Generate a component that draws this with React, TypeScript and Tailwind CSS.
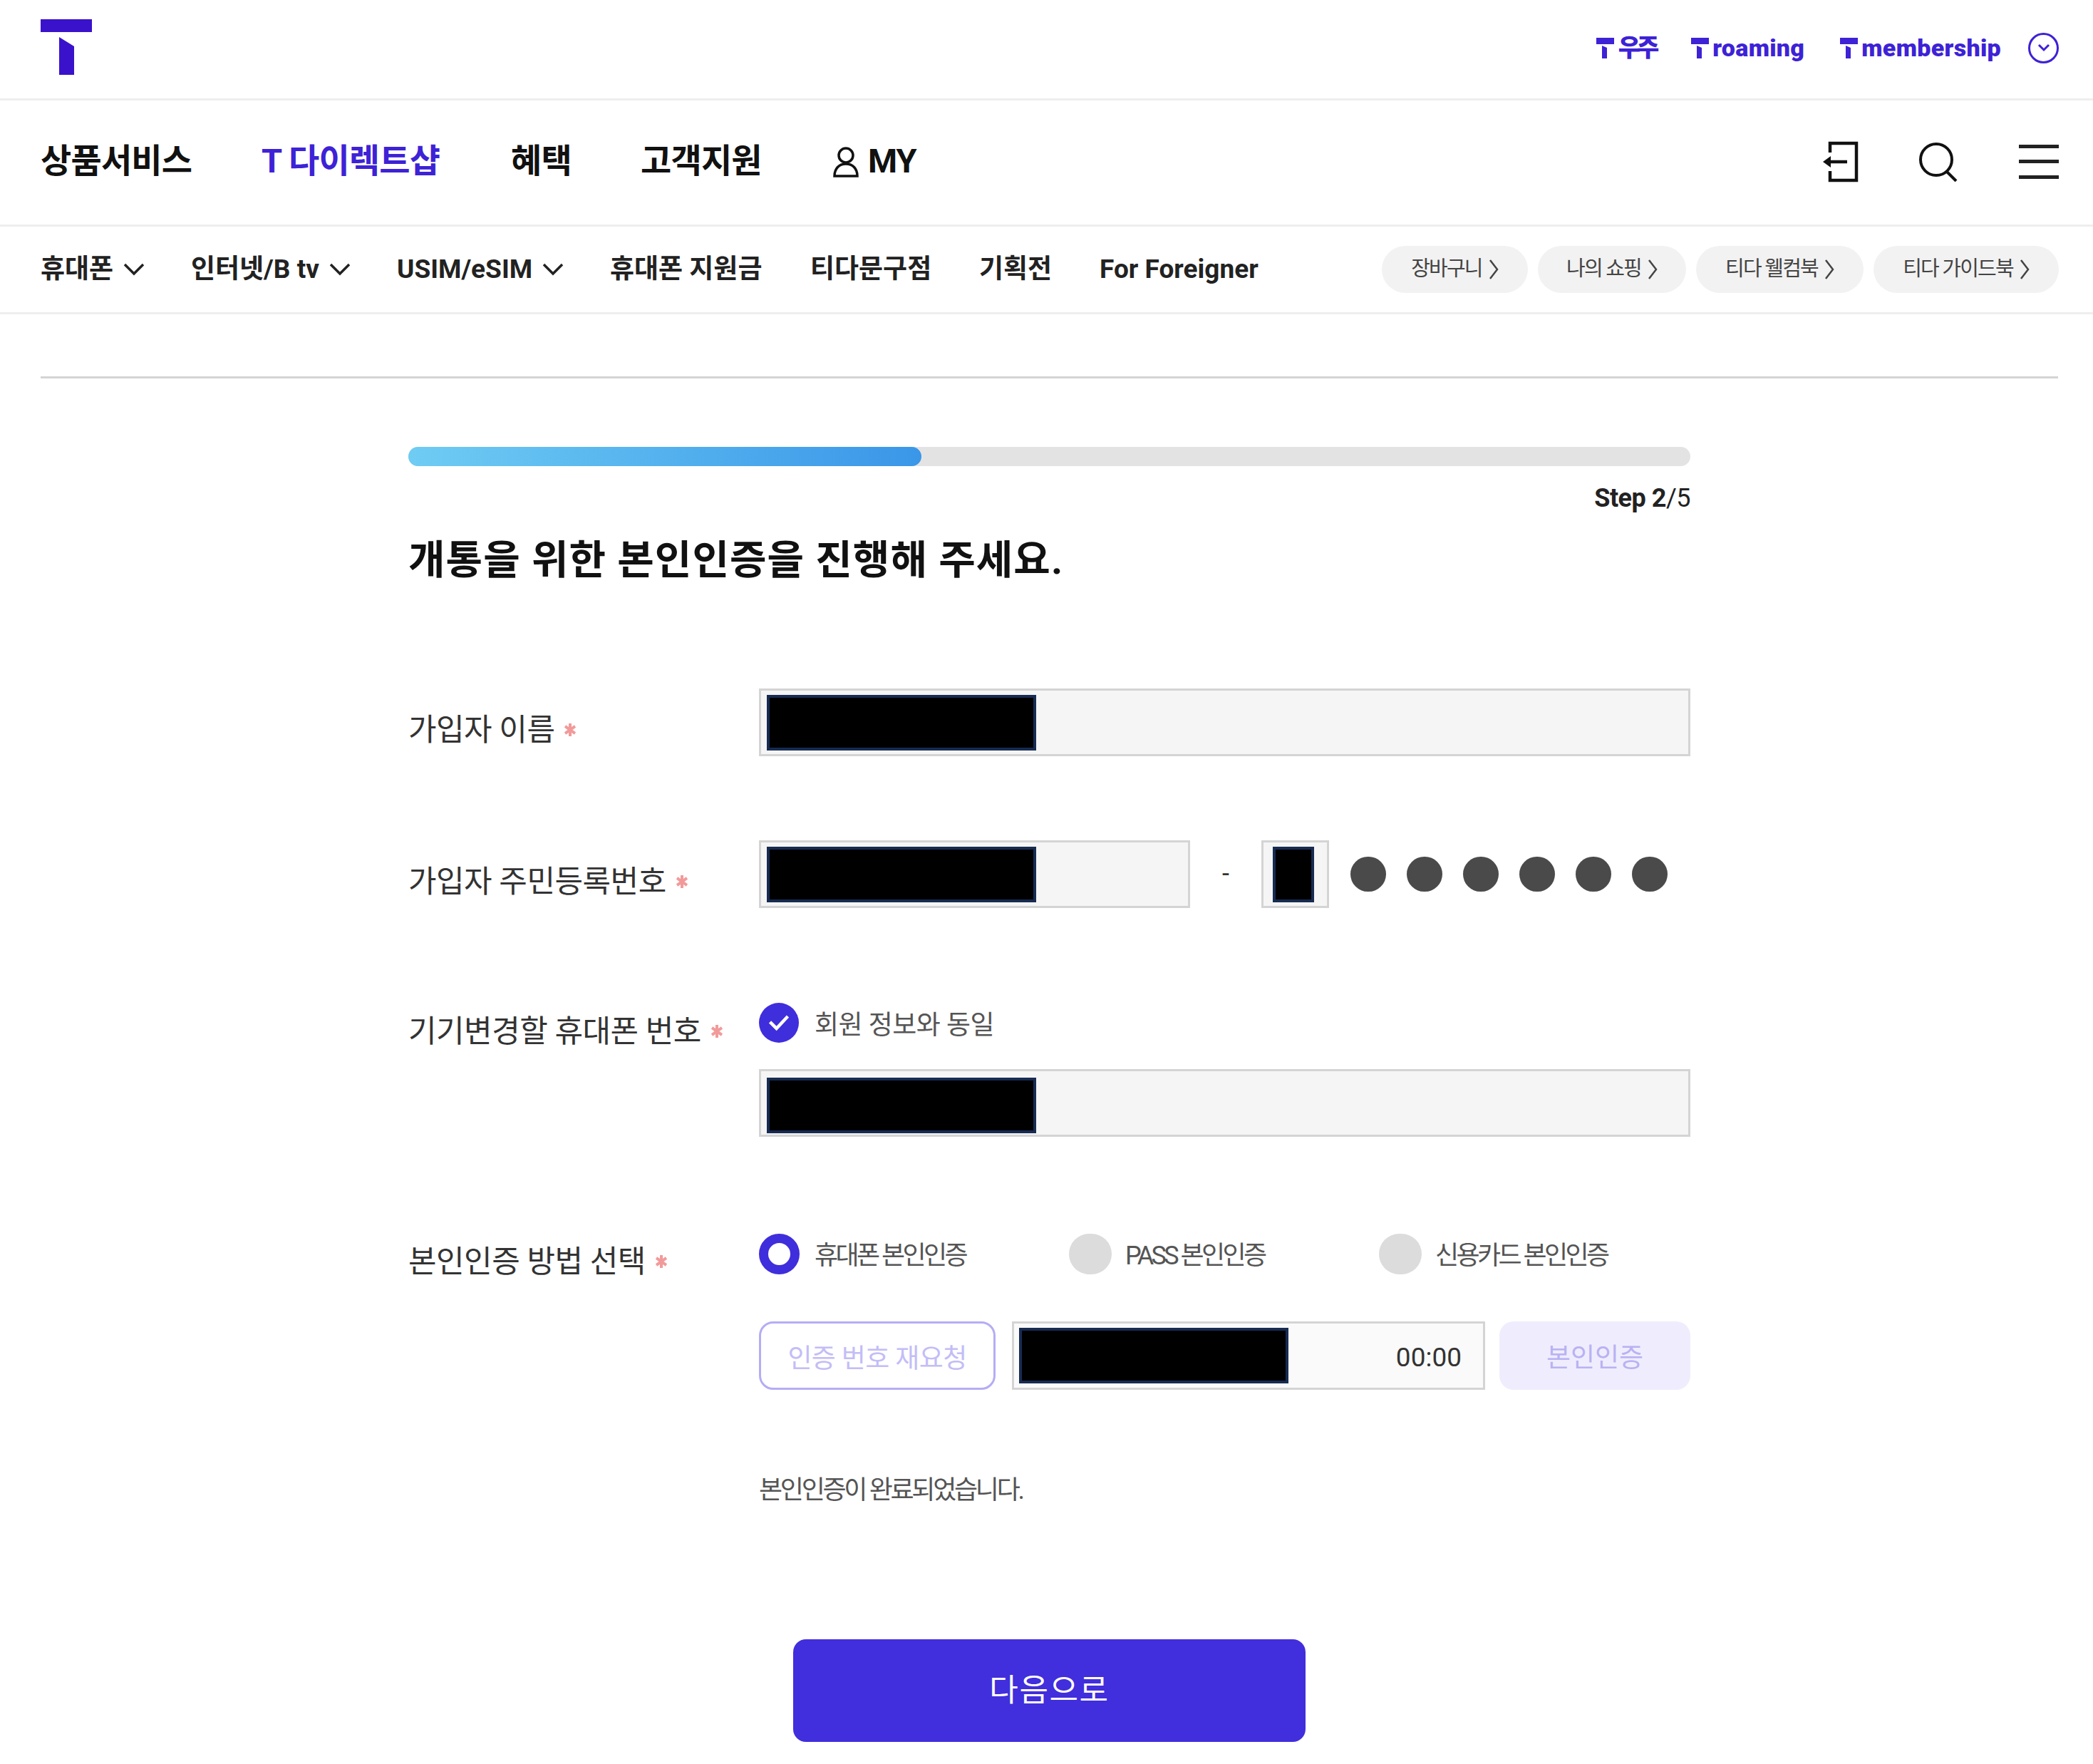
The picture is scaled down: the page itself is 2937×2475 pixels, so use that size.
const FONT = "font-['Roboto','Noto_Sans_CJK_KR',sans-serif]"

const MAIN_NAV = [
  { label: '상품서비스', active: false },
  { label: 'T 다이렉트샵', active: true },
  { label: '혜택', active: false },
  { label: '고객지원', active: false },
]

const SUB_NAV = [
  { label: '휴대폰', w: 'w-[211px]', caret: true },
  { label: '인터넷/B tv', w: 'w-[289px]', caret: true },
  { label: 'USIM/eSIM', w: 'w-[299px]', caret: true },
  { label: '휴대폰 지원금', w: 'w-[281px]', caret: false },
  { label: '티다문구점', w: 'w-[237px]', caret: false },
  { label: '기획전', w: 'w-[169px]', caret: false },
  { label: 'For Foreigner', w: 'w-auto', caret: false },
]

const PILLS = [
  { label: '장바구니', w: 'w-[205px]' },
  { label: '나의 쇼핑', w: 'w-[208px]' },
  { label: '티다 웰컴북', w: 'w-[235px]' },
  { label: '티다 가이드북', w: 'w-[260px]' },
]

function SmallT() {
  return (
    <svg width="25" height="30" viewBox="0 0 25 30" className="shrink-0">
      <rect x="0" y="1" width="25" height="9" fill="#3d22d6" />
      <path d="M8 12l7 3v15H8z" fill="#3d22d6" />
    </svg>
  )
}

function Caret() {
  return (
    <svg width="30" height="18" viewBox="0 0 30 18" fill="none" stroke="#222" strokeWidth="3.5" className="shrink-0">
      <path d="M2 2l13 13L28 2" />
    </svg>
  )
}

function Star() {
  return (
    <svg width="16" height="20" viewBox="0 0 16 20" stroke="#f29a9a" strokeWidth="4" className="ml-[14px] shrink-0">
      <path d="M8 1v18M1 5l14 10M15 5L1 15" />
    </svg>
  )
}

function Redacted({ w = 'w-[378px]', extra = '' }: { w?: string; extra?: string }) {
  return <div className={`${w} ${extra} h-[78px] shrink-0 bg-black border-[4px] border-[#172b52]`} />
}

function Label({ text, top }: { text: string; top: string }) {
  return (
    <div className={`w-[492px] shrink-0 flex items-center h-[60px] ${top} text-[43px] tracking-[-0.5px] text-[#333]`}>
      <span>{text}</span>
      <Star />
    </div>
  )
}

function Field({ w, children }: { w: string; children: React.ReactNode }) {
  return (
    <div className={`${w} h-[95px] shrink-0 flex items-center pl-[8px] bg-[#f5f5f5] border-[3px] border-[#d4d4d4]`}>
      {children}
    </div>
  )
}

function Radio({ label, on }: { label: string; on?: boolean }) {
  return (
    <div className="w-[435px] h-[57px] flex items-center">
      {on ? (
        <div className="w-[57px] h-[57px] rounded-full border-[13px] border-[#3f2edc] bg-white" />
      ) : (
        <div className="w-[60px] h-[57px] rounded-full bg-[#dcdcdc]" />
      )}
      <span className={`${on ? 'ml-[21px]' : 'ml-[19px]'} pt-[5px] text-[36px] tracking-[-3.6px] text-[#555]`}>{label}</span>
    </div>
  )
}

export default function App() {
  return (
    <div className={`w-[2937px] bg-white text-[#111] ${FONT}`}>
      {/* top bar */}
      <div className="h-[141px] border-b-[3px] border-[#eeeeee] px-[48px] pl-[57px] flex justify-between">
        <svg width="72" height="78" viewBox="0 0 72 78" className="mt-[27px]">
          <rect x="0" y="0" width="72" height="18" fill="#3a12cc" />
          <path d="M26 25l21 13v40H26z" fill="#3a12cc" />
        </svg>
        <div className="flex items-center h-[134px] text-[#3d22d6] font-black text-[34px] tracking-[0.3px]">
          <div className="flex items-center gap-[6px]">
            <SmallT />
            <span className="tracking-[-5px]">우주</span>
          </div>
          <div className="flex items-center gap-[5px] ml-[50px]">
            <SmallT />
            <span>roaming</span>
          </div>
          <div className="flex items-center gap-[5px] ml-[50px]">
            <SmallT />
            <span>membership</span>
          </div>
          <div className="ml-[38px] w-[43px] h-[43px] rounded-full border-[3px] border-[#3d22d6] flex items-center justify-center">
            <svg width="18" height="12" viewBox="0 0 18 12" fill="none" stroke="#3d22d6" strokeWidth="3">
              <path d="M2 2l7 7 7-7" />
            </svg>
          </div>
        </div>
      </div>

      {/* main nav */}
      <div className="h-[177px] border-b-[3px] border-[#eeeeee] pl-[57px] pr-[48px] pb-[3px] flex items-center justify-between">
        <div className="flex items-center text-[47px] font-bold tracking-[-0.8px]">
          <span className="w-[310px]">{MAIN_NAV[0].label}</span>
          <span className="w-[350px] text-[#3d22d6]">{MAIN_NAV[1].label}</span>
          <span className="w-[182px]">{MAIN_NAV[2].label}</span>
          <span className="w-[269px]">{MAIN_NAV[3].label}</span>
          <svg width="38" height="44" viewBox="0 0 38 44" fill="none" stroke="#111" strokeWidth="3.5">
            <circle cx="19" cy="13" r="10" />
            <path d="M3 42c0-10 6-17 16-17s16 7 16 17z" />
          </svg>
          <span className="ml-[12px] tracking-[-1px]">MY</span>
        </div>
        <div className="flex items-center">
          <svg width="50" height="58" viewBox="0 0 50 58" fill="none" stroke="#111" strokeWidth="4.5">
            <path d="M10 16V3h37v52H10V42" />
            <path d="M34 29H6" />
            <path d="M0 29l11-8v16z" fill="#111" strokeWidth="0" />
          </svg>
          <svg width="56" height="56" viewBox="0 0 56 56" fill="none" stroke="#111" strokeWidth="4" className="ml-[84px]">
            <circle cx="25" cy="25" r="22" />
            <path d="M40 42l13 13" />
          </svg>
          <div className="ml-[85px] w-[56px] h-[48px] flex flex-col justify-between">
            <div className="h-[5px] bg-[#222]" />
            <div className="h-[5px] bg-[#222]" />
            <div className="h-[5px] bg-[#222]" />
          </div>
        </div>
      </div>

      {/* sub nav */}
      <div className="h-[123px] border-b-[3px] border-[#eeeeee] pl-[57px] pr-[48px] flex items-center justify-between">
        <div className="flex items-center text-[37px] font-bold tracking-[0px] text-[#222]">
          {SUB_NAV.map(item => (
            <div key={item.label} className={`${item.w} flex items-center gap-[14px]`}>
              <span>{item.label}</span>
              {item.caret && <Caret />}
            </div>
          ))}
        </div>
        <div className="flex items-center gap-[14px]">
          {PILLS.map(p => (
            <div
              key={p.label}
              className={`${p.w} h-[66px] rounded-full bg-[#f2f2f2] flex items-center justify-center gap-[10px] text-[29px] tracking-[-1.8px] text-[#444]`}
            >
              <span>{p.label}</span>
              <svg width="13" height="28" viewBox="0 0 13 28" fill="none" stroke="#444" strokeWidth="2.5">
                <path d="M1 1l10 13L1 27" />
              </svg>
            </div>
          ))}
        </div>
      </div>

      <div className="ml-[57px] mr-[49px] mt-[87px] border-t-[3px] border-[#d4d4d4]" />

      {/* step form */}
      <div className="ml-[573px] w-[1799px] pb-[27px]">
        <div className="mt-[96px] h-[27px] rounded-full bg-[#e3e3e3]">
          <div className="w-[720px] h-full rounded-full bg-gradient-to-r from-[#6fccf3] to-[#3a96e8]" />
        </div>
        <div className="mt-[25px] h-[40px] leading-[40px] text-right text-[36px] tracking-[-0.5px] text-[#222]">
          <span className="font-bold">Step 2</span>/5
        </div>
        <h1 className="mt-[32px] h-[70px] leading-[70px] text-[56px] font-bold tracking-[1.1px] text-[#111]">
          개통을 위한 본인인증을 진행해 주세요.
        </h1>

        <div className="mt-[145px] flex">
          <Label text="가입자 이름" top="mt-[28px]" />
          <Field w="flex-1">
            <Redacted />
          </Field>
        </div>

        <div className="mt-[118px] flex">
          <Label text="가입자 주민등록번호" top="mt-[28px]" />
          <Field w="w-[605px]">
            <Redacted />
          </Field>
          <span className="w-[100px] text-center leading-[95px] text-[36px] text-[#333]">-</span>
          <div className="w-[95px] h-[95px] flex items-center pl-[13px] bg-[#f5f5f5] border-[3px] border-[#d4d4d4]">
            <Redacted w="w-[58px]" />
          </div>
          <div className="ml-[30px] h-[95px] flex items-center gap-[29px]">
            {[0, 1, 2, 3, 4, 5].map(i => (
              <div key={i} className="w-[50px] h-[49px] rounded-full bg-[#4a4a4a]" />
            ))}
          </div>
        </div>

        <div className="mt-[133px] flex">
          <Label text="기기변경할 휴대폰 번호" top="mt-[10px]" />
          <div className="flex-1">
            <div className="flex items-center h-[56px]">
              <div className="w-[56px] h-[56px] rounded-full bg-[#3f2edc] flex items-center justify-center">
                <svg width="34" height="28" viewBox="0 0 30 24" fill="none" stroke="#fff" strokeWidth="4">
                  <path d="M4 11l8 8L26 4" />
                </svg>
              </div>
              <span className="ml-[22px] pt-[8px] text-[37px] tracking-[-0.5px] text-[#555]">회원 정보와 동일</span>
            </div>
            <div className="mt-[37px]">
              <Field w="w-full">
                <Redacted extra="mt-[6px]" />
              </Field>
            </div>
          </div>
        </div>

        <div className="mt-[136px] flex h-[57px]">
          <Label text="본인인증 방법 선택" top="mt-[9px]" />
          <div className="flex-1 flex">
            <Radio label="휴대폰 본인인증" on />
            <Radio label="PASS 본인인증" />
            <Radio label="신용카드 본인인증" />
          </div>
        </div>

        <div className="mt-[66px] ml-[492px] flex">
          <div className="w-[332px] h-[96px] pt-[9px] rounded-[20px] border-[3px] border-[#b5adf5] flex items-center justify-center text-[37px] tracking-[-0.6px] text-[#c3bdf7]">
            인증 번호 재요청
          </div>
          <div className="ml-[23px] w-[664px] h-[96px] pl-[7px] pr-[30px] flex items-center justify-between bg-[#fafafa] border-[3px] border-[#d4d4d4]">
            <Redacted />
            <span className="pt-[6px] text-[37px] text-[#333]">00:00</span>
          </div>
          <div className="ml-[20px] w-[268px] h-[96px] pt-[8px] rounded-[20px] bg-[#efedfd] flex items-center justify-center text-[37px] text-[#b9b2f3]">
            본인인증
          </div>
        </div>

        <p className="mt-[116px] ml-[492px] h-[50px] leading-[50px] text-[36px] tracking-[-3.3px] text-[#555]">
          본인인증이 완료되었습니다.
        </p>

        <button className="block mt-[184px] ml-[540px] w-[719px] h-[144px] rounded-[18px] bg-[#412edc] text-white text-[44px] tracking-[1.6px]">
          다음으로
        </button>
      </div>
    </div>
  )
}
